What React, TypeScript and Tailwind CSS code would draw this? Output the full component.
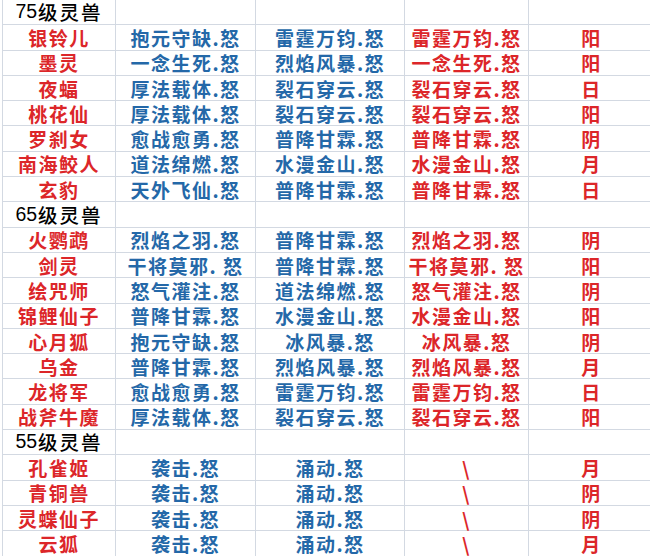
const SECTIONS = [
  {
    title: '75级灵兽',
    rows: [
      ['银铃儿', '抱元守缺.怒', '雷霆万钧.怒', '雷霆万钧.怒', '阳'],
      ['墨灵', '一念生死.怒', '烈焰风暴.怒', '一念生死.怒', '阳'],
      ['夜蝠', '厚法载体.怒', '裂石穿云.怒', '裂石穿云.怒', '日'],
      ['桃花仙', '厚法载体.怒', '裂石穿云.怒', '裂石穿云.怒', '阳'],
      ['罗刹女', '愈战愈勇.怒', '普降甘霖.怒', '普降甘霖.怒', '阴'],
      ['南海鲛人', '道法绵燃.怒', '水漫金山.怒', '水漫金山.怒', '月'],
      ['玄豹', '天外飞仙.怒', '普降甘霖.怒', '普降甘霖.怒', '日'],
    ],
  },
  {
    title: '65级灵兽',
    rows: [
      ['火鹦鹉', '烈焰之羽.怒', '普降甘霖.怒', '烈焰之羽.怒', '阴'],
      ['剑灵', '干将莫邪. 怒', '普降甘霖.怒', '干将莫邪. 怒', '阳'],
      ['绘咒师', '怒气灌注.怒', '道法绵燃.怒', '怒气灌注.怒', '阴'],
      ['锦鲤仙子', '普降甘霖.怒', '水漫金山.怒', '水漫金山.怒', '阳'],
      ['心月狐', '抱元守缺.怒', '冰风暴.怒', '冰风暴.怒', '阴'],
      ['乌金', '普降甘霖.怒', '烈焰风暴.怒', '烈焰风暴.怒', '月'],
      ['龙将军', '愈战愈勇.怒', '雷霆万钧.怒', '雷霆万钧.怒', '日'],
      ['战斧牛魔', '厚法载体.怒', '裂石穿云.怒', '裂石穿云.怒', '阳'],
    ],
  },
  {
    title: '55级灵兽',
    rows: [
      ['孔雀姬', '袭击.怒', '涌动.怒', '\\', '月'],
      ['青铜兽', '袭击.怒', '涌动.怒', '\\', '阴'],
      ['灵蝶仙子', '袭击.怒', '涌动.怒', '\\', '阴'],
      ['云狐', '袭击.怒', '涌动.怒', '\\', '月'],
    ],
  },
];

// red, blue, blue, red, red
const COLORS = ['text-[#dc2629]', 'text-[#2468a8]', 'text-[#2468a8]', 'text-[#dc2629]', 'text-[#dc2629]'];

const ROW = 'grid grid-cols-[113px_140px_149px_124px_126px] h-[25.3px]';
const CELL = 'border-r border-b border-[#d3d9e2] flex items-center justify-center whitespace-nowrap';

export default function App() {
  return (
    <div
      className="w-[650px] h-[556px] overflow-hidden bg-white pl-[2px]"
      style={{ fontFamily: '"Noto Sans CJK SC", "Noto Sans", sans-serif' }}
    >
      <div className="border-l border-[#d3d9e2] w-[652px]">
        {SECTIONS.map((sec, si) => (
          <div key={si}>
            {/* section title row */}
            <div className={`${ROW} ${si === 0 ? 'h-[24px]' : ''}`}>
              <div className={`${CELL} text-[19.5px] leading-none text-black font-medium tracking-[2px]`}>
                <span className="font-['Liberation_Sans'] font-normal tracking-normal mr-[1px]">{sec.title.slice(0, 2)}</span>
                <span>{sec.title.slice(2)}</span>
              </div>
              <div className={CELL} />
              <div className={CELL} />
              <div className={CELL} />
              <div className={CELL} />
            </div>
            {sec.rows.map((row, ri) => (
              <div key={ri} className={ROW}>
                {row.map((txt, ci) => (
                  <div key={ci} className={`${CELL} ${COLORS[ci]} text-[19px] leading-none font-bold tracking-[1.5px]`}>
                    {txt}
                  </div>
                ))}
              </div>
            ))}
          </div>
        ))}
      </div>
    </div>
  );
}
